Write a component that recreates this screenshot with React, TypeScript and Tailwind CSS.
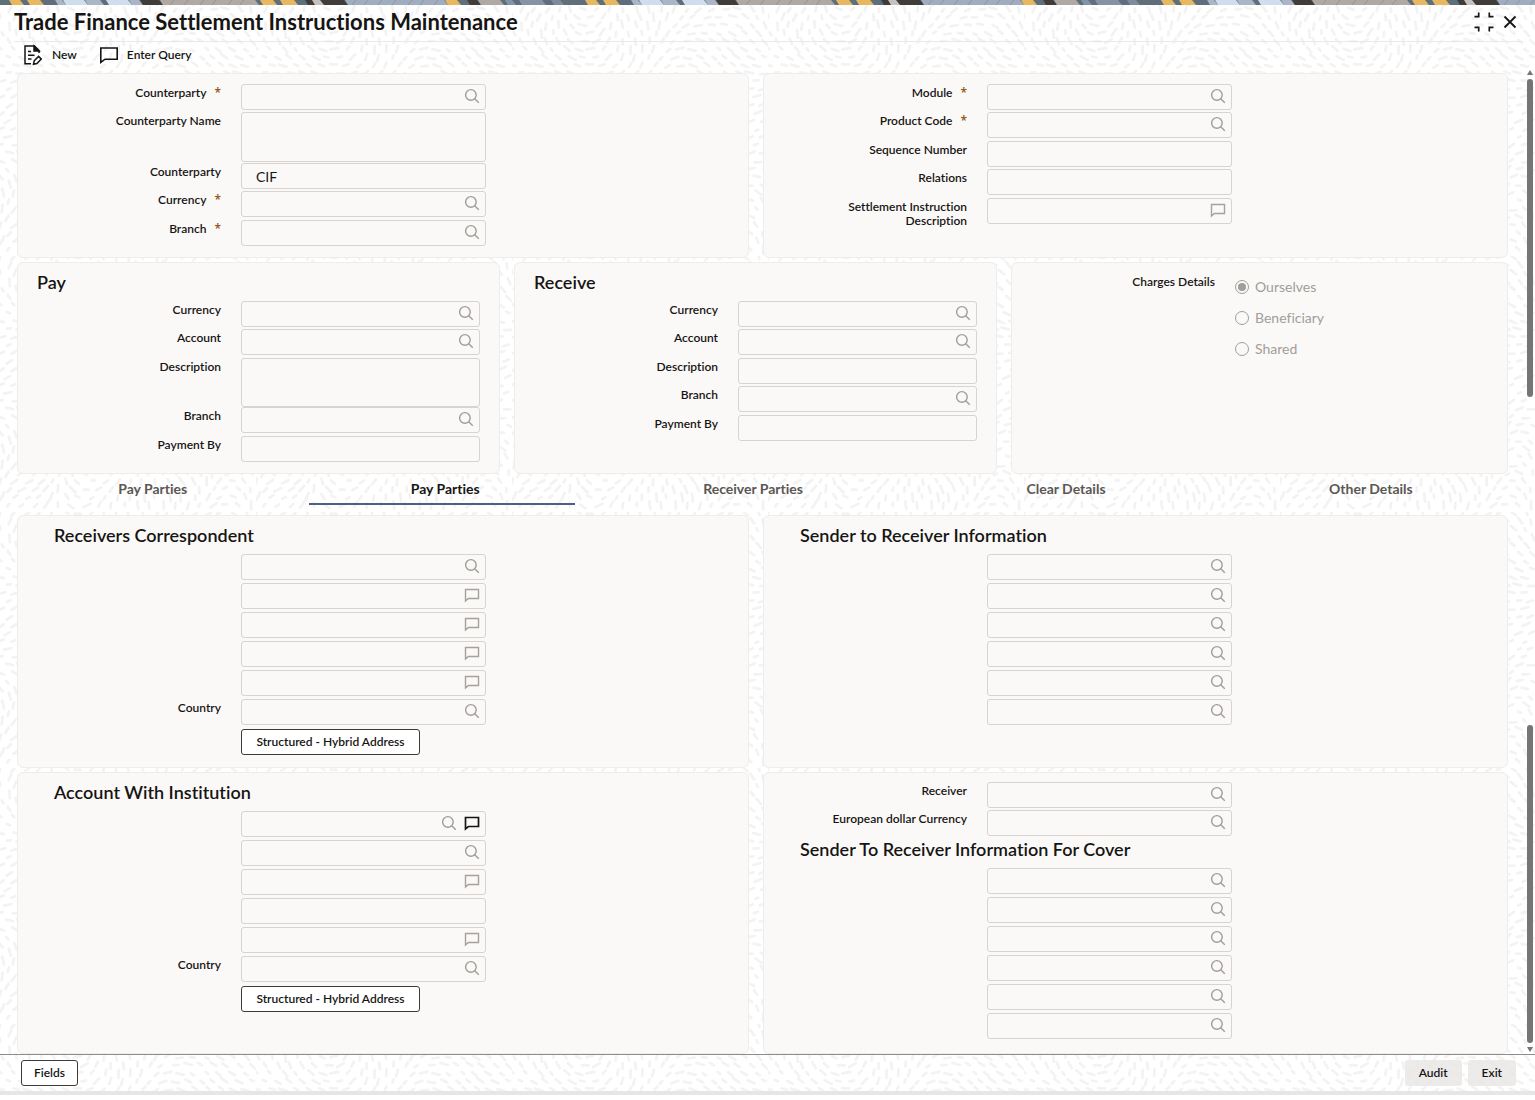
import { useId, type ReactNode } from "react";

type IconName = "search" | "note" | "noteDark" | "searchNote";

/* ---------- decoration ---------- */

const TILE = 256;

function buildDashes() {
  let seed = 11;
  const rnd = () => {
    seed = (seed * 16807) % 2147483647;
    return seed / 2147483647;
  };
  const cols = 20;
  const rows = 32;
  const k = (2 * Math.PI) / TILE;
  let d = "";
  for (let r = 0; r < rows; r++) {
    for (let c = 0; c < cols; c++) {
      const x = ((c + (r % 2) * 0.5 + rnd() * 0.3) * TILE) / cols;
      const y = ((r + rnd() * 0.3) * TILE) / rows;
      const a = 1.2 * Math.sin(k * x + 0.6) + 1.1 * Math.cos(k * (x + y)) + 0.5 * Math.sin(k * (2 * x - y));
      const len = 3 + rnd() * 5;
      const dx = (Math.cos(a) * len) / 2;
      const dy = (Math.sin(a) * len) / 2;
      d += `M${(x - dx).toFixed(1)} ${(y - dy).toFixed(1)}L${(x + dx).toFixed(1)} ${(y + dy).toFixed(1)}`;
    }
  }
  return d;
}

const DASHES = buildDashes();

function Texture() {
  return (
    <svg className="pointer-events-none absolute inset-0 -z-10 h-full w-full" aria-hidden="true">
      <defs>
        <pattern id="dashes" width={TILE} height={TILE} patternUnits="userSpaceOnUse">
          <path d={DASHES} stroke="#f4f3f3" strokeWidth="2.8" strokeLinecap="round" fill="none" />
        </pattern>
      </defs>
      <rect width="100%" height="100%" fill="url(#dashes)" />
    </svg>
  );
}

const BANDS: [number, number, string][] = [
  [10, 22, "#e8b860"],
  [28, 42, "#e8b860"],
  [56, 64, "#a8b6c6"],
  [64, 86, "#cfdeec"],
  [86, 102, "#a8b6c6"],
  [107, 130, "#cfdeec"],
  [130, 141, "#a8b6c6"],
  [141, 161, "#403c3a"],
  [161, 257, "#b0a8a2"],
  [261, 275, "#e8b860"],
  [281, 296, "#e8b860"],
  [306, 346, "#403c3a"],
  [313, 322, "#c4c2c0"],
  [346, 446, "#9fadbe"],
  [446, 459, "#e8b860"],
  [468, 479, "#403c3a"],
  [479, 502, "#b0a8a2"],
  [506, 514, "#8494a4"],
  [520, 544, "#8494a4"],
  [552, 562, "#7c8c9c"],
];

const FLECKS = [170, 184, 200, 212, 228, 240, 352, 364, 378, 392, 408, 420, 434];

function TopBand() {
  return (
    <svg className="block h-[5px] w-full shrink-0" aria-hidden="true">
      <defs>
        <pattern id="band" width="576" height="5" patternUnits="userSpaceOnUse">
          <rect width="576" height="5" fill="#5f6e7b" />
          {BANDS.map(([a, b, fill]) => (
            <path key={a} d={`M${a - 1} 0H${b - 2}L${b + 2} 5H${a + 2}Z`} fill={fill} />
          ))}
          {FLECKS.map((x) => (
            <path key={x} d={`M${x} 5L${x + 4} 0`} stroke="#7f848c" strokeWidth="1" opacity="0.6" />
          ))}
        </pattern>
      </defs>
      <rect width="100%" height="5" fill="url(#band)" />
    </svg>
  );
}

/* ---------- icons ---------- */

function SearchIcon() {
  return (
    <svg viewBox="0 0 16 16" className="size-4" fill="none" stroke="#a09c98" strokeWidth="1.4" aria-hidden="true">
      <circle cx="6.9" cy="6.9" r="5.3" />
      <path d="M10.7 10.7L14.8 14.8" />
    </svg>
  );
}

function NoteIcon({ dark = false }: { dark?: boolean }) {
  return (
    <svg
      viewBox="0 0 16 16"
      className={dark ? "size-4 text-[#161513]" : "size-4 text-[#a5a19d]"}
      fill="none"
      stroke="currentColor"
      strokeWidth={dark ? 1.7 : 1.4}
      aria-hidden="true"
    >
      <path d="M1.5 2.5H14.5V11.5H4.4L1.5 13.9Z" />
    </svg>
  );
}

function NewIcon() {
  return (
    <svg viewBox="0 0 20 22" className="h-[22px] w-5" fill="none" stroke="#161513" strokeWidth="1.5" aria-hidden="true">
      <path d="M8 19.8H2V2H11.5L16 6.5V9" />
      <path d="M11 2V7H16Z" fill="#161513" />
      <path d="M5 7.5H8M5 11.2H11.5M5 15H8.5" />
      <path d="M10.5 20.2L11.2 16.8L15.6 12.4L18.3 15.1L13.9 19.5Z" />
    </svg>
  );
}

function QueryIcon() {
  return (
    <svg viewBox="0 0 20 20" className="size-5" fill="none" stroke="#161513" strokeWidth="1.6" aria-hidden="true">
      <path d="M1.8 3H18.2V14.2H6L1.8 17.4Z" />
    </svg>
  );
}

function CollapseIcon() {
  return (
    <svg viewBox="0 0 20 20" className="size-5" fill="none" stroke="#161513" strokeWidth="1.7" aria-hidden="true">
      <path d="M0.5 4.7H4.7V0.5M15.3 0.5V4.7H19.5M0.5 15.3H4.7V19.5M15.3 19.5V15.3H19.5" />
    </svg>
  );
}

function CloseIcon() {
  return (
    <svg viewBox="0 0 14 14" className="size-3.5" stroke="#161513" strokeWidth="1.8" aria-hidden="true">
      <path d="M1.5 1.5L12.5 12.5M12.5 1.5L1.5 12.5" />
    </svg>
  );
}

/* ---------- form parts ---------- */

const BOX = "block w-full rounded-[3px] border border-[#d6d3d0] bg-transparent px-3.5 text-sm text-[#161513]";

function FieldIcons({ icon }: { icon: IconName }) {
  return (
    <span className="absolute inset-y-0 right-1.5 flex items-center gap-[7px] pb-0.5">
      {(icon === "search" || icon === "searchNote") && (
        <button type="button" aria-label="Search">
          <SearchIcon />
        </button>
      )}
      {icon !== "search" && (
        <button type="button" aria-label="Open text">
          <NoteIcon dark={icon === "searchNote"} />
        </button>
      )}
    </span>
  );
}

type FieldProps = {
  label?: string;
  name?: string;
  required?: boolean;
  icon?: IconName;
  value?: string;
  multiline?: "tall" | "short";
  wide?: boolean;
};

function Field({ label, name, required, icon, value, multiline, wide }: FieldProps) {
  const id = useId();
  return (
    <div className="flex items-start gap-5">
      <div className="flex w-[203px] shrink-0 justify-end pl-14 pt-0.5 text-right text-xs leading-[14px] font-semibold">
        {label && (
          <label htmlFor={id}>
            {label}
            {required && <span className="pl-2 font-['Noto_Sans'] leading-none text-[#9a5b1f]">*</span>}
          </label>
        )}
      </div>
      <div className={wide ? "relative mr-[19px] min-w-0 flex-1" : "relative w-[245px]"}>
        {multiline ? (
          <textarea
            id={id}
            className={`${BOX} -mb-0.5 resize-none ${multiline === "tall" ? "h-[50px]" : "h-[49px]"}`}
          />
        ) : (
          <input
            id={id}
            type="text"
            defaultValue={value}
            aria-label={label ? undefined : name}
            className={`${BOX} h-[26px]`}
          />
        )}
        {icon && <FieldIcons icon={icon} />}
      </div>
    </div>
  );
}

/* Rows alternate 2px and 3px gaps. */
function Fields({ children }: { children: ReactNode }) {
  return <div className="[&>*:nth-child(even)]:mb-[3px] [&>*:nth-child(odd)]:mb-0.5">{children}</div>;
}

function LooseFields({ children }: { children: ReactNode }) {
  return <div className="flex flex-col gap-[3px]">{children}</div>;
}

function Panel({ children, className }: { children: ReactNode; className: string }) {
  return <section className={`rounded-md border border-[#efedeb] bg-[#fbf9f8] ${className}`}>{children}</section>;
}

function Heading({ children, className = "" }: { children: ReactNode; className?: string }) {
  return <h2 className={`mb-[7px] text-lg leading-6 font-semibold ${className}`}>{children}</h2>;
}

function AddressButton() {
  return (
    <div className="ml-[223px]">
      <button
        type="button"
        className="h-[26px] w-[179px] rounded-[3px] border border-[#3d3a37] bg-white text-xs font-semibold"
      >
        Structured - Hybrid Address
      </button>
    </div>
  );
}

function Radio({ label, checked = false }: { label: string; checked?: boolean }) {
  return (
    <label className="flex items-center gap-1.5 text-sm leading-5 text-[#a19d99]">
      <input
        type="radio"
        name="charges"
        defaultChecked={checked}
        disabled
        className="size-3.5 appearance-none rounded-full border border-[#a19d99] bg-clip-content p-0.5 checked:bg-[#a19d99]"
      />
      {label}
    </label>
  );
}

const TABS = ["Pay Parties", "Pay Parties", "Receiver Parties", "Clear Details", "Other Details"];

function Tabs() {
  return (
    <div role="tablist" className="flex h-[41px] items-start gap-[27px]">
      {TABS.map((tab, i) => (
        <button
          key={i}
          type="button"
          role="tab"
          aria-selected={i === 1}
          className={
            i === 1
              ? "h-[31px] flex-auto border-b-2 border-[#4d5f86] pl-1.5 text-sm font-bold text-[#161513]"
              : "h-[31px] flex-auto border-b-2 border-transparent pl-1.5 text-sm font-bold text-[#5b5753]"
          }
        >
          {tab}
        </button>
      ))}
    </div>
  );
}

function ScrollRail() {
  return (
    <div className="-mt-[3px] flex w-[7px] flex-col items-center" aria-hidden="true">
      <div className="h-0 w-0 border-x-[3px] border-b-[5px] border-x-transparent border-b-[#757575]" />
      <div className="mt-1 flex w-1.5 flex-1 flex-col justify-between">
        <div className="h-[33%] w-full rounded-full bg-[#757575]" />
        <div className="h-[33%] w-full rounded-full bg-[#757575]" />
      </div>
      <div className="mt-1 mb-0.5 h-0 w-0 border-x-[3px] border-t-[5px] border-x-transparent border-t-[#757575]" />
    </div>
  );
}

export default function App() {
  return (
    <div className="bg-white font-['Lato','Noto_Sans',sans-serif] text-[#161513] [font-variant-ligatures:no-common-ligatures]">
      <div className="relative isolate">
        <Texture />
        <TopBand />

        <header className="ml-3.5 mr-3 flex h-[37px] items-center justify-between border-b border-[#ebe9e7] pr-1.5 pb-[3px]">
          <h1 className="text-[22px] leading-7 font-bold">Trade Finance Settlement Instructions Maintenance</h1>
          <div className="flex items-center gap-[9px]">
            <button type="button" aria-label="Collapse">
              <CollapseIcon />
            </button>
            <button type="button" aria-label="Close">
              <CloseIcon />
            </button>
          </div>
        </header>

        <nav className="flex h-[31px] items-center gap-[22px] pl-[23px] pb-1.5 text-xs font-semibold">
          <button type="button" className="flex items-center gap-[9px]">
            <NewIcon />
            New
          </button>
          <button type="button" className="flex items-center gap-2">
            <QueryIcon />
            Enter Query
          </button>
        </nav>

        <div className="flex border-b border-[#8f8b87] pr-0.5">
          <main className="mr-[18px] min-w-0 flex-1 pl-[17px]">
            <div className="grid grid-cols-[732fr_745fr] gap-3.5">
              <Panel className="pt-2.5 pb-[9px]">
                <Fields>
                  <Field label="Counterparty" required icon="search" />
                  <Field label="Counterparty Name" multiline="tall" />
                  <Field label="Counterparty" value="CIF" />
                  <Field label="Currency" required icon="search" />
                  <Field label="Branch" required icon="search" />
                </Fields>
              </Panel>
              <Panel className="pt-2.5 pb-[9px]">
                <Fields>
                  <Field label="Module" required icon="search" />
                  <Field label="Product Code" required icon="search" />
                  <Field label="Sequence Number" />
                  <Field label="Relations" />
                  <Field label="Settlement Instruction Description" icon="note" />
                </Fields>
              </Panel>
            </div>

            <div className="mt-1 grid grid-cols-[483fr_483fr_497fr] gap-3.5">
              <Panel className="pt-[7px] pb-[9px]">
                <Heading className="pl-[19px]">Pay</Heading>
                <Fields>
                  <Field wide label="Currency" icon="search" />
                  <Field wide label="Account" icon="search" />
                  <Field wide label="Description" multiline="short" />
                  <Field wide label="Branch" icon="search" />
                  <Field wide label="Payment By" />
                </Fields>
              </Panel>
              <Panel className="pt-[7px] pb-[9px]">
                <Heading className="pl-[19px]">Receive</Heading>
                <Fields>
                  <Field wide label="Currency" icon="search" />
                  <Field wide label="Account" icon="search" />
                  <Field wide label="Description" />
                  <Field wide label="Branch" icon="search" />
                  <Field wide label="Payment By" />
                </Fields>
              </Panel>
              <Panel className="pt-3 pb-[9px]">
                <fieldset className="flex items-start gap-5">
                  <legend className="float-left w-[203px] text-right text-xs leading-[14px] font-semibold">
                    Charges Details
                  </legend>
                  <div className="flex flex-col gap-[11px] pt-0.5">
                    <Radio label="Ourselves" checked />
                    <Radio label="Beneficiary" />
                    <Radio label="Shared" />
                  </div>
                </fieldset>
              </Panel>
            </div>

            <Tabs />

            <div className="grid grid-cols-[732fr_745fr] gap-x-3.5 gap-y-1">
              <Panel className="pt-[7px] pb-3">
                <Heading className="pl-9">Receivers Correspondent</Heading>
                <LooseFields>
                  <Field name="Correspondent" icon="search" />
                  <Field name="Correspondent line 2" icon="note" />
                  <Field name="Correspondent line 3" icon="note" />
                  <Field name="Correspondent line 4" icon="note" />
                  <Field name="Correspondent line 5" icon="note" />
                  <Field label="Country" icon="search" />
                  <AddressButton />
                </LooseFields>
              </Panel>
              <Panel className="pt-[7px] pb-3">
                <Heading className="pl-9">Sender to Receiver Information</Heading>
                <LooseFields>
                  {[1, 2, 3, 4, 5, 6].map((n) => (
                    <Field key={n} name={`Information ${n}`} icon="search" />
                  ))}
                </LooseFields>
              </Panel>
              <Panel className="pt-[7px] pb-3">
                <Heading className="pl-9">Account With Institution</Heading>
                <LooseFields>
                  <Field name="Institution" icon="searchNote" />
                  <Field name="Institution line 2" icon="search" />
                  <Field name="Institution line 3" icon="note" />
                  <Field name="Institution line 4" />
                  <Field name="Institution line 5" icon="note" />
                  <Field label="Country" icon="search" />
                  <AddressButton />
                </LooseFields>
              </Panel>
              <Panel className="pt-[9px] pb-3.5">
                <Fields>
                  <Field label="Receiver" icon="search" />
                  <Field label="European dollar Currency" icon="search" />
                </Fields>
                <Heading className="-mt-0.5 pl-9">Sender To Receiver Information For Cover</Heading>
                <LooseFields>
                  {[1, 2, 3, 4, 5, 6].map((n) => (
                    <Field key={n} name={`Cover information ${n}`} icon="search" />
                  ))}
                </LooseFields>
              </Panel>
            </div>
          </main>
          <ScrollRail />
        </div>

        <footer className="flex h-9 items-center justify-between pl-[21px] pr-[19px] text-xs font-semibold">
          <button type="button" className="h-[26px] rounded-[3px] border border-[#3d3a37] bg-white px-3">
            Fields
          </button>
          <div className="flex gap-1.5">
            <button type="button" className="h-[26px] rounded-[3px] bg-[#e8e6e4]/80 px-3.5">
              Audit
            </button>
            <button type="button" className="h-[26px] rounded-[3px] bg-[#e8e6e4]/80 px-3.5">
              Exit
            </button>
          </div>
        </footer>
      </div>
      <div className="h-1 bg-[#e6e6e6]" />
    </div>
  );
}
